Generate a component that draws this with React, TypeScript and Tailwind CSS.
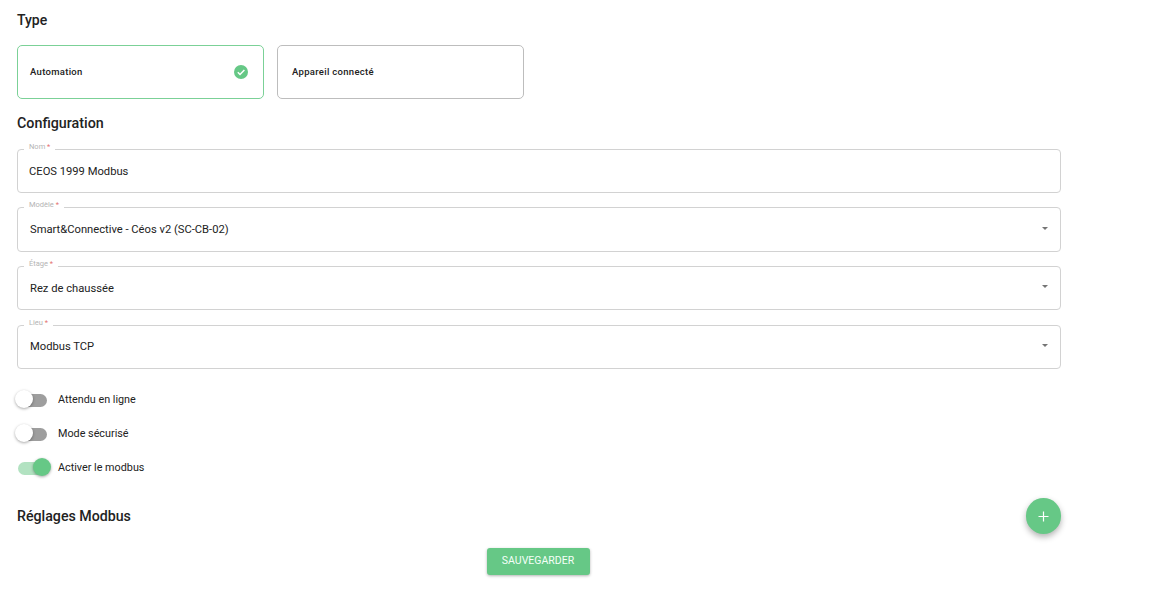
import React from "react";

function Field({ label, value, select, x, mt, h, ty, ly }: { label: string; value: string; select?: boolean; x: string; mt: string; h: string; ty: string; ly: string }) {
  return (
    <div className={`relative w-[1044px] rounded-[4px] border border-[#d2d2d2] flex items-center justify-between pr-[12px] ${h} ${mt}`}>
      <span className={`text-[11.2px] text-[#222] ${x} ${ty}`}>{value}</span>
      {select && <span className="w-0 h-0 border-x-[3.5px] border-x-transparent border-t-[3.5px] border-t-[#757575] -mt-[3px]" />}
      <span className={`absolute left-[6px] h-[9px] bg-white px-[5px] text-[7.5px] leading-[9px] text-[#b4b4b4] ${ly}`}>
        {label} <span className="text-[#e57373]">*</span>
      </span>
    </div>
  );
}

function Toggle({ on, label, mt }: { on?: boolean; label: string; mt: string }) {
  return (
    <div className={`flex items-center h-[20px] ${mt}`}>
      <div className="relative w-[41px] h-[20px] shrink-0">
        <div className={`absolute top-[4px] h-[13px] w-[29px] rounded-full left-[1px] ${on ? "bg-[#b2e2c1]" : "bg-[#9e9e9e]"}`} />
        <div className={`absolute top-0 h-[18px] w-[18px] rounded-full shadow-[0_1px_3px_rgba(0,0,0,0.35)] ${on ? "left-[16px] bg-[#66c886]" : "left-[-2px] bg-white"}`} />
      </div>
      <span className="text-[10.8px] text-[#222]">{label}</span>
    </div>
  );
}

export default function App() {
  return (
    <div className="w-[1171px] h-[611px] bg-white pl-[17px] overflow-hidden font-['Roboto',sans-serif]">
      <h2 className="pt-[12px] text-[14px] leading-[16px] font-medium text-[#222]">Type</h2>
      <div className="flex gap-[13px] mt-[17px]">
        <div className="w-[247px] h-[54px] rounded-[5px] border border-[#7bd197] flex items-center justify-between pl-[12px] pr-[15px]">
          <span className="text-[9.5px] font-medium tracking-[0.3px] text-[#222]">Automation</span>
          <svg width="14" height="14" viewBox="0 0 24 24">
            <circle cx="12" cy="12" r="12" fill="#66c886" />
            <path d="M6.5 12.5l3.8 3.8 7.5-7.8" fill="none" stroke="#fff" strokeWidth="2.6" />
          </svg>
        </div>
        <div className="w-[247px] h-[54px] rounded-[5px] border border-[#bdbdbd] flex items-center pl-[14px]">
          <span className="text-[9.5px] font-medium tracking-[0.3px] text-[#222]">Appareil connecté</span>
        </div>
      </div>
      <h2 className="mt-[16px] text-[14.3px] leading-[16px] font-medium text-[#222]">Configuration</h2>
      <Field label="Nom" value="CEOS 1999 Modbus" x="pl-[11px]" ty="mt-[2px]" ly="-top-[8px]" mt="mt-[18px]" h="h-[44px]" />
      <Field label="Modèle" value="Smart&Connective - Céos v2 (SC-CB-02)" select x="pl-[12px]" ty="mt-[1px]" ly="-top-[8px]" mt="mt-[14px]" h="h-[45px]" />
      <Field label="Étage" value="Rez de chaussée" select x="pl-[12px]" ty="mt-[2px]" ly="-top-[8px]" mt="mt-[14px]" h="h-[44px]" />
      <Field label="Lieu" value="Modbus TCP" select x="pl-[12px]" ty="" ly="-top-[8px]" mt="mt-[15px]" h="h-[44px]" />
      <Toggle label="Attendu en ligne" mt="mt-[21px]" />
      <Toggle label="Mode sécurisé" mt="mt-[14px]" />
      <Toggle on label="Activer le modbus" mt="mt-[14px]" />
      <div className="flex items-center justify-between w-[1044px] mt-[20px] h-[36px]">
        <h2 className="text-[14.2px] leading-[16px] font-medium text-[#222] -mt-[1px]">Réglages Modbus</h2>
        <button className="w-[35px] h-[36px] rounded-full bg-[#66c886] flex items-center justify-center shadow-[0_3px_6px_rgba(0,0,0,0.3)]">
          <svg width="11" height="11" viewBox="0 0 11 11"><path d="M5.5 0.5v10M0.5 5.5h10" stroke="#fff" strokeWidth="1.2" /></svg>
        </button>
      </div>
      <div className="w-[1042px] flex justify-center mt-[15px]">
        <button className="w-[103px] h-[27px] -mt-[1px] pb-[1px] rounded-[3px] bg-[#66c886] text-[#f4fff8] text-[10.5px] font-normal shadow-[0_1px_3px_rgba(0,0,0,0.3)]">SAUVEGARDER</button>
      </div>
    </div>
  );
}
